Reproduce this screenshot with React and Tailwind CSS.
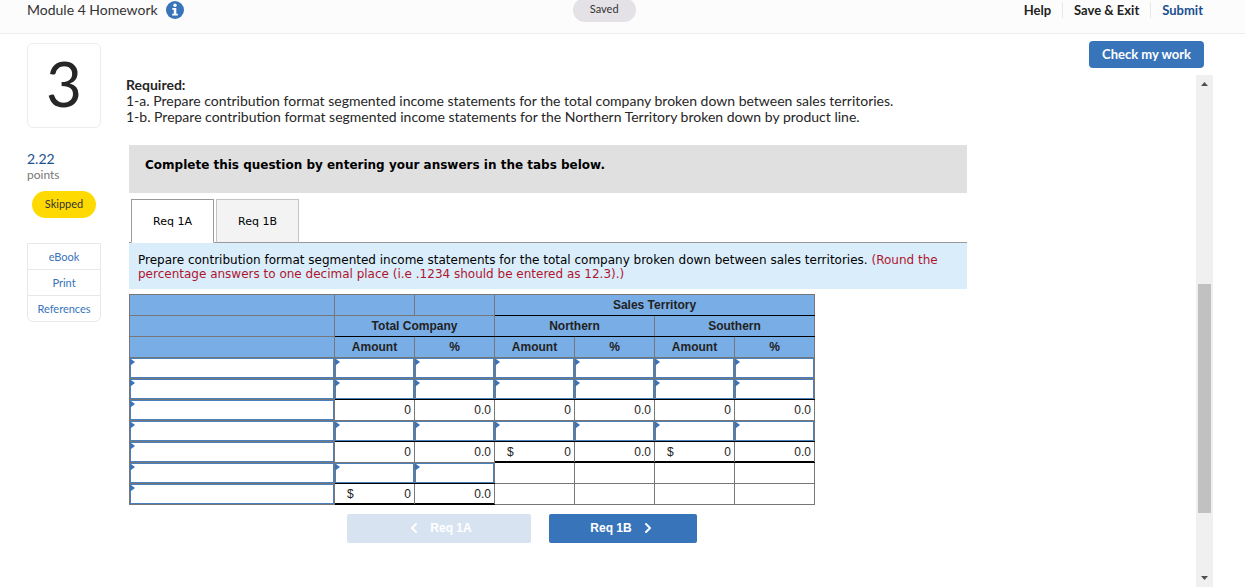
import React, { useState } from 'react';
import { ChevronLeft, ChevronRight } from 'lucide-react';

const regions = ['Total company', 'Northern', 'Southern'];

// one entry per row: a cell group is 'input', 'total', 'dollar' or 'blank'
const rows = [
  { id: 1, groups: ['input', 'input', 'input'], line: ['', '', ''] },
  { id: 2, groups: ['input', 'input', 'input'], line: ['single', 'single', 'single'] },
  { id: 3, groups: ['total', 'total', 'total'], line: ['', '', ''] },
  { id: 4, groups: ['input', 'input', 'input'], line: ['single', 'single', 'single'] },
  { id: 5, groups: ['total', 'dollar', 'dollar'], line: ['', 'thick', 'thick'] },
  { id: 6, groups: ['input', 'blank', 'blank'], line: ['single', '', ''] },
  { id: 7, groups: ['dollar', 'blank', 'blank'], line: ['thick', '', ''] },
];

const lineStyles = {
  '': '',
  single: 'border-b-black',
  thick: 'border-b-black shadow-[inset_0_-1px_0_#000]',
};

function InputCell({ label, line }) {
  return (
    <td className={`relative border border-[#777] p-0 ${lineStyles[line]}`}>
      <input
        type="text"
        aria-label={label}
        className="block h-5 w-full border border-[#4a80bd] bg-white px-1 text-xs outline-none"
      />
      <svg
        className="pointer-events-none absolute left-0 top-px"
        width="5"
        height="6"
        viewBox="0 0 5 6"
        aria-hidden="true"
      >
        <path d="M0 0h1l4 3-4 3H0z" fill="#3874ba" />
      </svg>
    </td>
  );
}

function ValueCell({ value, dollar, line }) {
  return (
    <td className={`h-[21px] border border-[#777] p-0 ${lineStyles[line]}`}>
      <div className="flex justify-between pl-3 pr-[3px] leading-4">
        <span>{dollar ? '$' : ''}</span>
        <span>{value}</span>
      </div>
    </td>
  );
}

function CellGroup({ type, line, label }) {
  if (type === 'input') {
    return (
      <>
        <InputCell label={`${label} amount`} line={line} />
        <InputCell label={`${label} percent`} line={line} />
      </>
    );
  }
  const blank = type === 'blank';
  return (
    <>
      <ValueCell value={blank ? '' : '0'} dollar={type === 'dollar'} line={line} />
      <ValueCell value={blank ? '' : '0.0'} line={line} />
    </>
  );
}

function IncomeTable() {
  const th = 'h-[21px] border border-[#777] p-0 text-center font-bold leading-4';
  return (
    <table className="mt-[5px] w-[686px] table-fixed border-collapse font-['Liberation_Sans',Arial,sans-serif] text-xs text-[#222]">
      <colgroup>
        <col className="w-[205px]" />
        <col />
        <col />
        <col />
        <col />
        <col />
        <col />
      </colgroup>
      <thead className="bg-[#79ade6]">
        <tr>
          <td className={th} />
          <td className={th} />
          <td className={th} />
          <th colSpan={4} className={`${th} border-b-black`}>Sales Territory</th>
        </tr>
        <tr>
          <td className={th} />
          <th colSpan={2} className={`${th} border-b-black`}>Total Company</th>
          <th colSpan={2} className={`${th} border-b-black`}>Northern</th>
          <th colSpan={2} className={`${th} border-b-black`}>Southern</th>
        </tr>
        <tr>
          <td className={th} />
          {regions.map((region) => (
            <React.Fragment key={region}>
              <th className={th}>Amount</th>
              <th className={th}>%</th>
            </React.Fragment>
          ))}
        </tr>
      </thead>
      <tbody>
        {rows.map((row) => (
          <tr key={row.id}>
            <InputCell label={`Row ${row.id} description`} line="" />
            {row.groups.map((type, i) => (
              <CellGroup
                key={regions[i]}
                type={type}
                line={row.line[i]}
                label={`Row ${row.id} ${regions[i]}`}
              />
            ))}
          </tr>
        ))}
      </tbody>
    </table>
  );
}

function Header() {
  return (
    <header className="border-b border-[#ececec] bg-[#fcfcfc] pb-3.5">
      <div className="flex h-[19px] items-center">
        <div className="flex w-[46%] items-center gap-2 pl-[27px]">
          <h1 className="text-sm text-[#333]">Module 4 Homework</h1>
          <button aria-label="Assignment information">
            <svg className="block" width="18" height="18" viewBox="0 0 18 18" aria-hidden="true">
              <circle cx="9" cy="9" r="9" fill="#3874ba" />
              <circle cx="9" cy="4.2" r="1.7" fill="#fff" />
              <path d="M6.3 7h4v5.8h1.5v1.7H6.2v-1.7h1.6V8.7H6.3z" fill="#fff" />
            </svg>
          </button>
        </div>
        <span className="flex h-6 w-[63px] items-center justify-center rounded-full bg-[#e4e2e6] text-[11px] text-[#333]">
          Saved
        </span>
        <nav className="ml-auto flex h-4 items-center divide-x divide-[#e8e8e8] pr-[31px] text-[13px] font-bold leading-4 text-[#222]">
          <a href="#help" className="px-[11px]">Help</a>
          <a href="#exit" className="px-[11px]">Save &amp; Exit</a>
          <a href="#submit" className="px-[11px] text-[#1b4f8f]">Submit</a>
        </nav>
      </div>
    </header>
  );
}

function Sidebar() {
  return (
    <aside className="w-[74px] shrink-0 pt-[9px]">
      <div className="flex h-[85px] items-center justify-center rounded-md border border-[#ececec] pb-1 text-[62px] text-[#262626]">
        3
      </div>
      <div className="mt-[23px] text-sm leading-4 text-[#1b4f8f]">2.22</div>
      <div className="text-xs leading-4 text-[#777]">points</div>
      <div className="mx-[5px] mt-2 flex h-[27px] items-center justify-center rounded-full bg-[#ffda00] text-[11px] text-[#333]">
        Skipped
      </div>
      <nav className="mt-[25px] flex flex-col divide-y divide-[#e8e8e8] rounded-b-md border border-[#e8e8e8] text-center text-[11px] leading-[25px] text-[#3874ba]">
        <a href="#ebook">eBook</a>
        <a href="#print">Print</a>
        <a href="#references">References</a>
      </nav>
    </aside>
  );
}

function Scrollbar() {
  return (
    <div className="flex w-[17px] shrink-0 flex-col items-center bg-[#f0f0f0]" aria-hidden="true">
      <svg width="17" height="17" viewBox="0 0 17 17">
        <path d="M5 11l3.5-4 3.5 4z" fill="#505050" />
      </svg>
      <div className="flex-[192]" />
      <div className="w-[13px] flex-[229] bg-[#c1c1c1]" />
      <div className="flex-[57]" />
      <svg width="17" height="17" viewBox="0 0 17 17">
        <path d="M5 6l3.5 4L12 6z" fill="#505050" />
      </svg>
    </div>
  );
}

export default function App() {
  const [tab, setTab] = useState('1A');
  const tabClass = (name) =>
    tab === name
      ? 'border-[#999] border-b-white bg-white'
      : 'border-[#c4c4c4] border-b-[#999] bg-[#f3f3f3]';

  return (
    <div className="flex min-h-screen flex-col bg-white font-['Lato',sans-serif]">
      <Header />
      <div className="flex flex-1 pl-[27px] pr-8">
        <Sidebar />
        <div className="flex min-w-0 flex-1 flex-col pl-[25px] pt-[7px]">
          <button className="mr-[9px] h-[27px] self-end rounded-sm bg-[#3874ba] px-[13px] text-[13px] font-bold text-white">
            Check my work
          </button>
          <div className="mt-[7px] flex flex-1 pb-px">
            <main className="min-w-0 flex-1 pt-0.5">
              <div className="text-sm leading-4 text-[#262626]">
                <p className="font-bold">Required:</p>
                <p>1-a. Prepare contribution format segmented income statements for the total company broken down between sales territories.</p>
                <p>1-b. Prepare contribution format segmented income statements for the Northern Territory broken down by product line.</p>
              </div>

              <div className="ml-[3px] mt-5 max-w-[838px] font-['DejaVu_Sans',Verdana,sans-serif] text-xs text-black">
                <div className="h-12 bg-[#e0e0e0] px-4 pt-3 font-bold leading-4">
                  Complete this question by entering your answers in the tabs below.
                </div>

                <div className="mt-1.5 flex gap-0.5 border-b border-[#999] pl-0.5 text-[11px]" role="tablist">
                  {['1A', '1B'].map((name) => (
                    <button
                      key={name}
                      role="tab"
                      aria-selected={tab === name}
                      onClick={() => setTab(name)}
                      className={`-mb-px h-11 w-[83px] border pt-0.5 ${tabClass(name)}`}
                    >
                      Req {name}
                    </button>
                  ))}
                </div>

                <p className="bg-[#daedfb] px-[9px] pb-2 pt-2.5 leading-[14px]">
                  Prepare contribution format segmented income statements for the total company broken down between sales territories.{' '}
                  <span className="text-[#b0152e]">
                    (Round the percentage answers to one decimal place (i.e .1234 should be entered as 12.3).)
                  </span>
                </p>

                <IncomeTable />

                <div className="ml-[218px] mt-[9px] flex gap-[18px] font-['Liberation_Sans',Arial,sans-serif] font-bold text-white">
                  <button
                    disabled={tab === '1A'}
                    onClick={() => setTab('1A')}
                    className="flex h-[29px] w-[184px] items-center justify-center gap-2 rounded-xs bg-[#3874ba] pb-0.5 disabled:bg-[#d7e3f1]"
                  >
                    <ChevronLeft size={16} strokeWidth={3} />
                    Req 1A
                  </button>
                  <button
                    disabled={tab === '1B'}
                    onClick={() => setTab('1B')}
                    className="flex h-[29px] w-[148px] items-center justify-center gap-2 rounded-xs bg-[#3874ba] pb-0.5 disabled:bg-[#d7e3f1]"
                  >
                    Req 1B
                    <ChevronRight size={16} strokeWidth={3} />
                  </button>
                </div>
              </div>
            </main>
            <Scrollbar />
          </div>
        </div>
      </div>
    </div>
  );
}
